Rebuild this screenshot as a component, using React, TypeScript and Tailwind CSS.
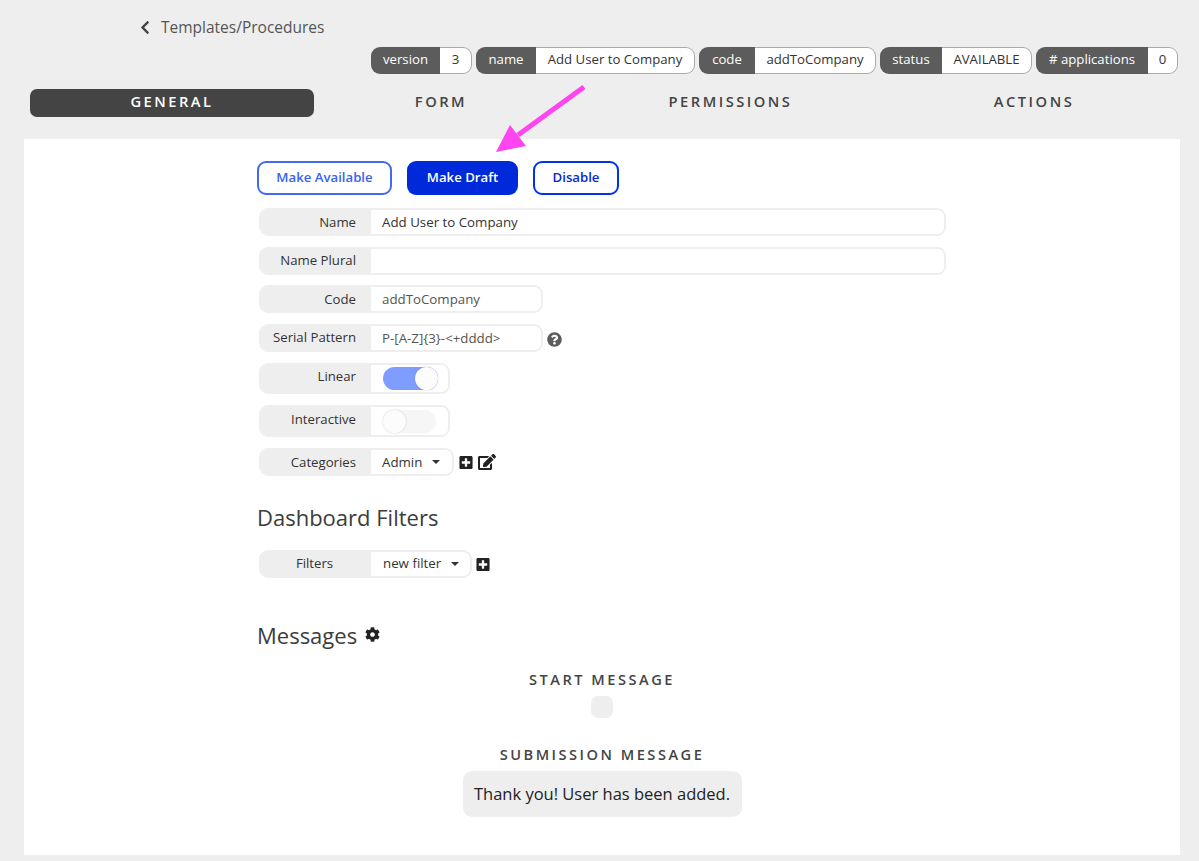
import { FaChevronLeft, FaCog, FaEdit, FaPlusSquare, FaQuestionCircle } from "react-icons/fa";
import { ReactNode } from "react";

const tags = [
  { label: "version", value: "3", labelW: "w-[69px]", valueW: "w-[32px]" },
  { label: "name", value: "Add User to Company", labelW: "w-[60px]", valueW: "w-[159px]" },
  { label: "code", value: "addToCompany", labelW: "w-[56px]", valueW: "w-[121px]" },
  { label: "status", value: "AVAILABLE", labelW: "w-[62px]", valueW: "w-[90px]" },
  { label: "# applications", value: "0", labelW: "w-[112px]", valueW: "w-[30px]" },
];

const tabs = [
  { label: "GENERAL", width: "w-[284px]", active: true },
  { label: "FORM", width: "w-[254px]", active: false },
  { label: "PERMISSIONS", width: "w-[325px]", active: false },
  { label: "ACTIONS", width: "w-[282px]", active: false },
];

function Row({
  label,
  width,
  height = "h-[28px]",
  labelClass = "",
  children,
}: {
  label: string;
  width: string;
  height?: string;
  labelClass?: string;
  children: ReactNode;
}) {
  return (
    <div className={`flex ${width} ${height} rounded-[9px] border-2 border-[#eeeeee] overflow-hidden`}>
      <div className={`w-[110px] shrink-0 bg-[#eeeeee] flex items-center justify-end pr-[15px] text-[13.2px] text-[#333333] ${labelClass}`}>
        {label}
      </div>
      <div className="flex-1 flex items-center pl-[12px] text-[13.3px] bg-white">{children}</div>
    </div>
  );
}

function Toggle({ on }: { on: boolean }) {
  return (
    <div className={`relative h-[23px] rounded-full ${on ? "w-[55px] bg-[#7f9dff]" : "w-[53px] bg-[#f6f6f6]"}`}>
      <div
        className={`absolute top-0 ${on ? "right-0" : "left-0"} w-[23px] h-[23px] rounded-full bg-[#fcfcfc] shadow-[0_0_2px_rgba(0,0,0,0.2)]`}
      />
    </div>
  );
}

function Caret() {
  return <span className="ml-[10px] w-0 h-0 border-x-[4px] border-x-transparent border-t-[4px] border-t-[#333333]" />;
}

export default function App() {
  return (
    <div className="relative w-[1199px] h-[861px] overflow-hidden bg-[#eeeeee] font-['Open_Sans',sans-serif] text-[#333333]">
      <div className="flex items-center h-[47px] pl-[140px] pt-[8px]">
        <FaChevronLeft className="w-[10px] h-[15px] text-[#444444]" />
        <span className="ml-[11px] text-[15.5px] text-[#555555]">Templates/Procedures</span>
      </div>

      <div className="flex justify-end gap-[4px] pr-[21px] h-[27px]">
        {tags.map((tag) => (
          <div key={tag.label} className="flex h-[27px] text-[13.2px]">
            <div className={`${tag.labelW} flex items-center justify-center pb-[2px] rounded-l-[9px] bg-[#5c5c5c] text-white`}>
              {tag.label}
            </div>
            <div
              className={`${tag.valueW} flex items-center justify-center pb-[2px] rounded-r-[9px] border border-l-0 border-[#aaaaaa] bg-white text-[#333333]`}
            >
              {tag.value}
            </div>
          </div>
        ))}
      </div>

      <div className="flex pl-[30px] mt-[15px] h-[28px]">
        {tabs.map((tab) => (
          <div
            key={tab.label}
            className={`${tab.width} flex items-center justify-center pb-[3px] rounded-[7px] text-[14.7px] font-semibold tracking-[2.5px] ${
              tab.active ? "bg-[#444444] text-white" : "text-[#444444]"
            }`}
          >
            {tab.label}
          </div>
        ))}
      </div>

      <div className="ml-[24px] mt-[22px] w-[1156px] h-[716px] bg-white pt-[22px] pl-[233px]">
        <div className="flex gap-[15px] text-[13.2px] font-semibold">
          <button type="button" className="w-[135px] h-[34px] rounded-[9px] border-2 border-[#4169f5] text-[#3a62f0] bg-white">
            Make Available
          </button>
          <button type="button" className="w-[111px] h-[34px] rounded-[9px] bg-[#0029d9] text-white">
            Make Draft
          </button>
          <button type="button" className="w-[86px] h-[34px] rounded-[9px] border-2 border-[#0033ee] text-[#0029d9] bg-white">
            Disable
          </button>
        </div>

        <div className="flex flex-col ml-[2px] mt-[13px]">
          <Row label="Name" width="w-[687px]" labelClass="pt-[1px]">
            <span className="mt-[1px] -ml-[1px]">Add User to Company</span>
          </Row>
          <div className="mt-[11px]">
            <Row label="Name Plural" width="w-[687px]">
              {""}
            </Row>
          </div>
          <div className="mt-[10px]">
            <Row label="Code" width="w-[284px]" labelClass="pt-[1px]">
              <span className="mt-[1px] -ml-[1px] text-[#555555]">addToCompany</span>
            </Row>
          </div>
          <div className="mt-[11px] flex items-center">
            <Row label="Serial Pattern" width="w-[284px]">
              <span className="mt-[1px] -ml-[1px] text-[#555555]">{"P-[A-Z]{3}-<+dddd>"}</span>
            </Row>
            <FaQuestionCircle className="ml-[4px] mt-[3px] w-[15px] h-[15px] text-[#5c5c5c]" />
          </div>
          <div className="mt-[11px]">
            <Row label="Linear" width="w-[191px]" height="h-[31px]" labelClass="pb-[3px]">
              <Toggle on />
            </Row>
          </div>
          <div className="mt-[11px]">
            <Row label="Interactive" width="w-[191px]" height="h-[32px]" labelClass="pb-[2px]">
              <Toggle on={false} />
            </Row>
          </div>
          <div className="mt-[11px] flex items-center">
            <Row label="Categories" width="w-[195px]" labelClass="pt-[1px]">
              <span className="mt-[1px] -ml-[1px]">Admin</span>
              <Caret />
            </Row>
            <FaPlusSquare className="ml-[5px] w-[14px] h-[15px] text-[#222222]" />
            <FaEdit className="ml-[5px] w-[18px] h-[16px] text-[#222222]" />
          </div>
        </div>

        <h2 className="mt-[26px] text-[22px] leading-[30px] text-[#3c3c3c]">Dashboard Filters</h2>

        <div className="ml-[2px] mt-[18px] flex items-center">
          <div className="flex w-[213px] h-[28px] rounded-[9px] border-2 border-[#eeeeee] overflow-hidden">
            <div className="w-[110px] shrink-0 bg-[#eeeeee] flex items-center justify-center pr-[3px] text-[13.2px] text-[#333333]">
              Filters
            </div>
            <div className="flex-1 flex items-center pl-[12px] text-[13.3px]">
              new filter
              <Caret />
            </div>
          </div>
          <FaPlusSquare className="ml-[4px] mt-[1px] w-[14px] h-[15px] text-[#222222]" />
        </div>

        <div className="flex items-start mt-[42px]">
          <h2 className="text-[22px] leading-[30px] text-[#3c3c3c]">Messages</h2>
          <FaCog className="ml-[8px] mt-[7px] w-[15px] h-[15px] text-[#222222]" />
        </div>

        <div className="w-[690px] flex flex-col items-center mt-[20px]">
          <div className="text-[14.6px] leading-[18px] font-semibold tracking-[2.5px] text-[#444444]">START MESSAGE</div>
          <div className="mt-[8px] w-[22px] h-[22px] rounded-[7px] bg-[#eeeeee]" />
          <div className="mt-[27px] text-[14.6px] leading-[18px] font-semibold tracking-[2.5px] text-[#444444]">SUBMISSION MESSAGE</div>
          <div className="mt-[8px] w-[279px] h-[46px] rounded-[9px] bg-[#eeeeee] flex items-center justify-center text-[16.5px] text-[#222222]">
            Thank you! User has been added.
          </div>
        </div>
      </div>

      <svg className="absolute left-[490px] top-[80px] w-[100px] h-[80px]" viewBox="0 0 100 80">
        <path d="M94 7 L28 55" stroke="#ff44f0" strokeWidth="5" fill="none" />
        <path d="M6 72 L20 45 L36 66 Z" fill="#ff44f0" />
      </svg>
    </div>
  );
}
